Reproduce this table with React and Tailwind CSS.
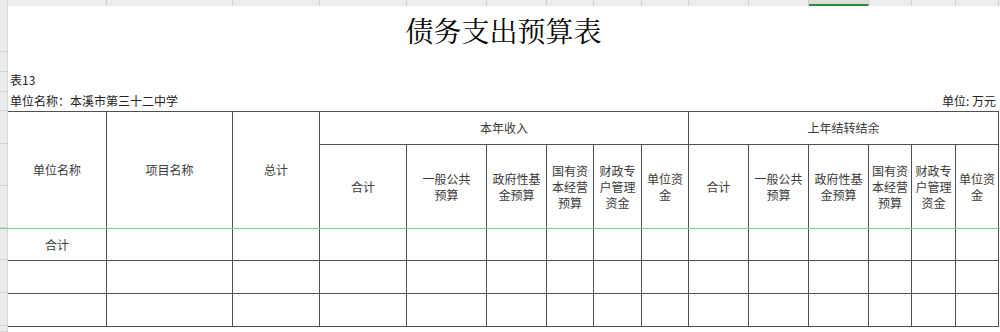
import React from "react";

const colW = [99, 126, 87, 87, 80, 60, 47, 48, 47, 60, 60, 60, 43, 44, 43];
const stripRows = [46, 20, 20, 19, 33, 42, 42, 32, 33, 33, 6];

const subHeads = [
  ["合计"],
  ["一般公共", "预算"],
  ["政府性基", "金预算"],
  ["国有资", "本经营", "预算"],
  ["财政专", "户管理", "资金"],
  ["单位资", "金"],
];

function Cell({ className = "", children }) {
  return (
    <div
      className={
        "border-r border-b border-[#505050] flex items-center justify-center text-center text-[12px] leading-[16px] text-[#3a3a3a] " +
        className
      }
    >
      {children}
    </div>
  );
}

function Lines({ lines }) {
  return (
    <div className="whitespace-nowrap">
      {lines.map((l, i) => (
        <div key={i}>{l}</div>
      ))}
    </div>
  );
}

export default function App() {
  return (
    <div
      className="relative w-[1000px] h-[332px] overflow-hidden bg-white"
      style={{ fontFamily: '"Noto Sans CJK SC", "Noto Sans", sans-serif' }}
    >
      {/* column header strip */}
      <div className="flex h-[6px] bg-[#ececec]">
        <div className="w-[8px] border-r border-[#d6d6d6]" />
        {colW.map((w, i) => (
          <div
            key={i}
            className={
              i === 11
                ? "h-full border-r border-[#d0d0d0] bg-[#dcdcdc] border-b-2 border-b-[#2f8a3a]"
                : "h-full border-r border-[#d0d0d0]"
            }
            style={{ width: w }}
          />
        ))}
        <div className="flex-1" />
      </div>

      <div className="flex">
        {/* row header strip */}
        <div className="w-[8px] flex flex-col bg-[#ececec] border-r border-[#d6d6d6]">
          {stripRows.map((h, i) => (
            <div key={i} className="border-b border-[#d2d2d2]" style={{ height: h }} />
          ))}
        </div>

        <div className="w-[991px] flex flex-col">
          <div className="h-[64px] pt-[10px] text-center">
            <div
              className="text-[28px] leading-[28px] text-black"
              style={{ fontFamily: '"Noto Serif CJK SC", "Noto Sans CJK SC", serif' }}
            >
              债务支出预算表
            </div>
          </div>
          <div className="h-[21px] pl-[2px] text-[12px] leading-[20px] text-[#222]">表13</div>
          <div className="h-[20px] flex justify-between pl-[2px] pr-[3px] text-[12px] leading-[20px] text-[#222]">
            <span>单位名称：本溪市第三十二中学</span>
            <span>单位: 万元</span>
          </div>

          <div className="grid grid-cols-[99px_126px_87px_87px_80px_60px_47px_48px_47px_60px_60px_60px_43px_44px_43px] grid-rows-[33px_84px_32px_33px_33px] border-t border-[#505050]">
            <Cell className="row-span-2">单位名称</Cell>
            <Cell className="row-span-2">项目名称</Cell>
            <Cell className="row-span-2">总计</Cell>
            <Cell className="col-span-6">本年收入</Cell>
            <Cell className="col-span-6">上年结转结余</Cell>
            {subHeads.map((s, i) => (
              <Cell key={"a" + i}>
                <Lines lines={s} />
              </Cell>
            ))}
            {subHeads.map((s, i) => (
              <Cell key={"b" + i}>
                <Lines lines={s} />
              </Cell>
            ))}
            {[0, 1, 2].map((r) =>
              colW.map((_, c) => (
                <Cell key={r + "-" + c}>{r === 0 && c === 0 ? "合计" : ""}</Cell>
              ))
            )}
          </div>
        </div>
      </div>

      {/* frozen-pane line */}
      <div className="absolute left-0 right-0 top-[228px] h-px bg-[#7ccf9e]" />
    </div>
  );
}
